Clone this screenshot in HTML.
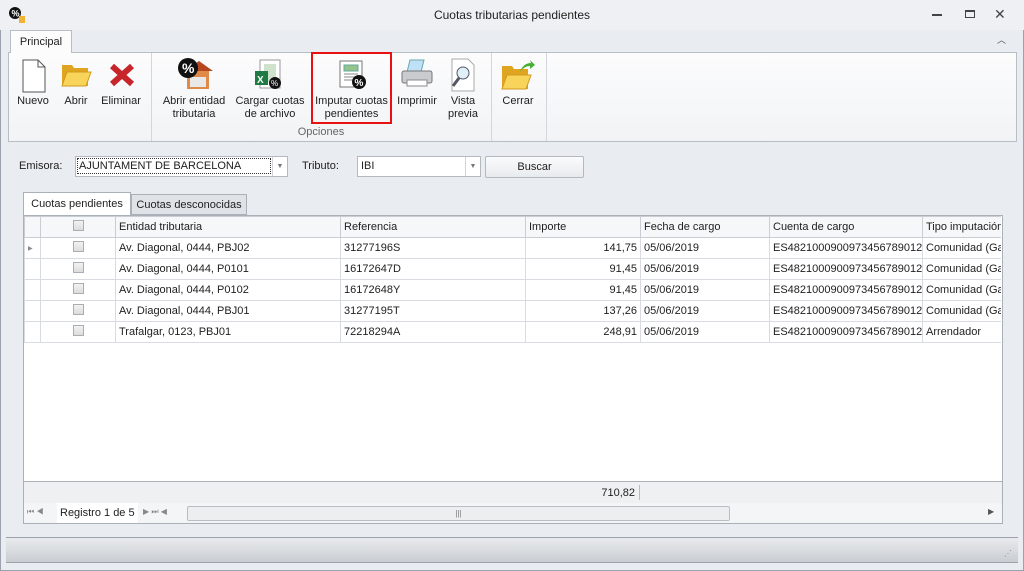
<!DOCTYPE html><html><head><style>
*{box-sizing:border-box;margin:0;padding:0}
body{width:1024px;height:571px;background:#fff;font-family:"Liberation Sans",sans-serif;font-size:11px;color:#1e1e1e;position:relative;overflow:hidden}
.a{position:absolute}
.win{left:0;top:0;width:1024px;height:571px;background:#e9ecf0;border:1px solid #9aa3ad}
.title{left:0;top:0;width:1024px;height:30px;background:#eef0f3}
.ribbon{left:8px;top:52px;width:1009px;height:90px;background:linear-gradient(#fcfcfd,#f1f3f5);border:1px solid #b8bec6}
.lbl{text-align:center;line-height:13px;font-size:11px}
.sep{width:1px;background:#d3d7dc;top:53px;height:88px}
table{border-collapse:collapse;table-layout:fixed}
td{border:1px solid #d8dbdf;height:21px;padding:0 3px;white-space:nowrap;overflow:hidden;font-size:11px}
.hd td{background:#f6f7f8;border-color:#c9ced4}
.cb{display:inline-block;width:11px;height:11px;border:1px solid #a9aeb4;background:linear-gradient(#f2f2f2,#dcdcdc)}
.r{text-align:right}
</style></head><body>
<div class="a win"></div>
<div class="a title"></div>
<svg class="a" style="left:8px;top:6px" width="18" height="18"><circle cx="7" cy="7" r="6" fill="#111"/><text x="3.5" y="10.5" fill="#fff" font-size="9" font-family="Liberation Sans" font-weight="bold">%</text><rect x="11" y="10" width="6" height="7" fill="#f2b233"/></svg>
<div class="a" style="left:0;width:1024px;top:8px;text-align:center;font-size:12px">Cuotas tributarias pendientes</div>
<div class="a" style="left:932px;top:14px;width:10px;height:2px;background:#444"></div>
<div class="a" style="left:965px;top:10px;width:10px;height:8px;border:1px solid #444;border-top-width:2px"></div>
<div class="a" style="left:994px;top:6px;font-size:14px;color:#444">✕</div>
<div class="a" style="left:997px;top:33px;font-size:9px;color:#555">︿</div>
<div class="a ribbon"></div>
<div class="a" style="left:10px;top:30px;width:62px;height:23px;background:#fcfcfd;border:1px solid #b8bec6;border-bottom:none;text-align:center;line-height:23px;font-size:11px">Principal</div>
<svg class="a" style="left:20px;top:59px" width="28" height="34"><path d="M3 1h15l7 7v25H3z" fill="#fff" stroke="#555"/><path d="M18 1v7h7" fill="none" stroke="#555"/></svg>
<svg class="a" style="left:60px;top:62px" width="32" height="26"><path d="M2 3h10l2 3h14v18H2z" fill="#e0a520"/><path d="M2 24l5-14h24l-5 14z" fill="#f8d45a" stroke="#d29a1a"/></svg>
<svg class="a" style="left:108px;top:62px" width="28" height="26"><path d="M4 4l20 18M24 4L4 22" stroke="#c8252b" stroke-width="6"/></svg>
<svg class="a" style="left:177px;top:57px" width="36" height="36"><rect x="10" y="12" width="22" height="20" fill="#e08a4a"/><path d="M8 14l14-10 14 10" fill="#b5461f"/><rect x="13" y="20" width="16" height="10" fill="#e8e8e8"/><circle cx="11" cy="11" r="10" fill="#111"/><text x="5" y="16" fill="#fff" font-size="14" font-weight="bold" font-family="Liberation Sans">%</text></svg>
<svg class="a" style="left:252px;top:58px" width="34" height="34"><rect x="8" y="2" width="20" height="28" fill="#fff" stroke="#999"/><rect x="12" y="6" width="12" height="18" fill="#cfe3cc"/><rect x="3" y="13" width="13" height="14" fill="#1f7a44"/><text x="5" y="25" fill="#fff" font-size="10" font-weight="bold" font-family="Liberation Sans">X</text><circle cx="23" cy="25" r="6" fill="#111"/><text x="19" y="28" fill="#fff" font-size="8" font-family="Liberation Sans">%</text></svg>
<div class="a" style="left:311px;top:52px;width:81px;height:72px;border:2px solid #e81010"></div>
<svg class="a" style="left:335px;top:58px" width="34" height="34"><rect x="5" y="3" width="22" height="26" fill="#fff" stroke="#777"/><rect x="9" y="7" width="14" height="6" fill="#93c48e" stroke="#6a9"/><path d="M9 16h14M9 19h14M9 22h10" stroke="#888"/><circle cx="24" cy="24" r="7" fill="#111"/><text x="19.5" y="28" fill="#fff" font-size="10" font-weight="bold" font-family="Liberation Sans">%</text></svg>
<svg class="a" style="left:400px;top:58px" width="34" height="32"><path d="M10 2h14l-3 12H7z" fill="#bfe0f7" stroke="#6aa"/><rect x="2" y="13" width="30" height="12" rx="2" fill="#c9cbce" stroke="#777"/><rect x="7" y="22" width="20" height="6" fill="#fff" stroke="#888"/></svg>
<svg class="a" style="left:446px;top:58px" width="34" height="34"><path d="M6 1h16l6 6v26H6z" fill="#fff" stroke="#aaa"/><circle cx="17" cy="15" r="6" fill="#dff0fb" stroke="#556"/><path d="M13 20l-6 8" stroke="#556" stroke-width="3"/></svg>
<svg class="a" style="left:500px;top:58px" width="36" height="34"><path d="M2 8h10l2 3h14v20H2z" fill="#e0a520"/><path d="M2 31l5-14h24l-5 14z" fill="#f8d45a" stroke="#d29a1a"/><path d="M20 14c2-6 6-9 11-9l-1-3 5 5-5 4v-3c-4 0-7 2-10 6z" fill="#46b035"/></svg>
<div class="a lbl" style="left:14px;top:95px;width:38px">Nuevo</div>
<div class="a lbl" style="left:58px;top:95px;width:36px">Abrir</div>
<div class="a lbl" style="left:98px;top:95px;width:46px">Eliminar</div>
<div class="a sep" style="left:151px"></div>
<div class="a lbl" style="left:155px;top:95px;width:78px">Abrir entidad<br>tributaria</div>
<div class="a lbl" style="left:232px;top:95px;width:76px">Cargar cuotas<br>de archivo</div>
<div class="a lbl" style="left:311px;top:95px;width:81px">Imputar cuotas<br>pendientes</div>
<div class="a lbl" style="left:395px;top:95px;width:44px">Imprimir</div>
<div class="a lbl" style="left:440px;top:95px;width:46px">Vista<br>previa</div>
<div class="a lbl" style="left:150px;top:126px;width:342px;color:#666">Opciones</div>
<div class="a sep" style="left:491px"></div>
<div class="a lbl" style="left:496px;top:95px;width:44px">Cerrar</div>
<div class="a sep" style="left:546px"></div>
<div class="a" style="left:19px;top:160px">Emisora:</div>
<div class="a" style="left:75px;top:156px;width:213px;height:21px;background:#fff;border:1px solid #b4b9bf"></div>
<div class="a" style="left:77px;top:158px;width:194px;height:16px;border:1px dotted #333;line-height:14px;padding-left:1px">AJUNTAMENT DE BARCELONA</div>
<div class="a" style="left:272px;top:157px;width:15px;height:19px;border-left:1px solid #d0d4d8;color:#777;font-size:7px;text-align:center;line-height:19px">▼</div>
<div class="a" style="left:302px;top:160px">Tributo:</div>
<div class="a" style="left:357px;top:156px;width:124px;height:21px;background:#fff;border:1px solid #b4b9bf;line-height:19px;padding-left:3px">IBI</div>
<div class="a" style="left:465px;top:157px;width:15px;height:19px;border-left:1px solid #d0d4d8;color:#777;font-size:7px;text-align:center;line-height:19px">▼</div>
<div class="a" style="left:485px;top:156px;width:99px;height:22px;border:1px solid #b4b9bf;border-radius:2px;background:linear-gradient(#fafbfc,#e8ebee);text-align:center;line-height:20px">Buscar</div>
<div class="a" style="left:23px;top:192px;width:108px;height:24px;background:#fff;border:1px solid #a9b0b8;border-bottom:none;text-align:center;line-height:22px">Cuotas pendientes</div>
<div class="a" style="left:131px;top:194px;width:116px;height:21px;background:#dfe3e8;border:1px solid #a9b0b8;text-align:center;line-height:20px">Cuotas desconocidas</div>
<div class="a" style="left:23px;top:215px;width:980px;height:309px;background:#fff;border:1px solid #a9b0b8"></div>
<div class="a" style="left:24px;top:216px;width:977px;height:130px;overflow:hidden">
<table style="width:978px">
<colgroup><col style="width:16px"><col style="width:75px"><col style="width:225px"><col style="width:185px"><col style="width:115px"><col style="width:129px"><col style="width:153px"><col style="width:80px"></colgroup>
<tr class="hd"><td></td><td style="text-align:center"><span class="cb"></span></td><td>Entidad tributaria</td><td>Referencia</td><td>Importe</td><td>Fecha de cargo</td><td>Cuenta de cargo</td><td>Tipo imputación</td></tr>
<tr><td style="font-size:6px;color:#888">▶</td><td style="text-align:center"><span class="cb"></span></td><td>Av. Diagonal, 0444, PBJ02</td><td>31277196S</td><td class="r">141,75</td><td>05/06/2019</td><td>ES4821000900973456789012</td><td>Comunidad (Ga</td></tr>
<tr><td></td><td style="text-align:center"><span class="cb"></span></td><td>Av. Diagonal, 0444, P0101</td><td>16172647D</td><td class="r">91,45</td><td>05/06/2019</td><td>ES4821000900973456789012</td><td>Comunidad (Ga</td></tr>
<tr><td></td><td style="text-align:center"><span class="cb"></span></td><td>Av. Diagonal, 0444, P0102</td><td>16172648Y</td><td class="r">91,45</td><td>05/06/2019</td><td>ES4821000900973456789012</td><td>Comunidad (Ga</td></tr>
<tr><td></td><td style="text-align:center"><span class="cb"></span></td><td>Av. Diagonal, 0444, PBJ01</td><td>31277195T</td><td class="r">137,26</td><td>05/06/2019</td><td>ES4821000900973456789012</td><td>Comunidad (Ga</td></tr>
<tr><td></td><td style="text-align:center"><span class="cb"></span></td><td>Trafalgar, 0123, PBJ01</td><td>72218294A</td><td class="r">248,91</td><td>05/06/2019</td><td>ES4821000900973456789012</td><td>Arrendador</td></tr>
</table></div>
<div class="a" style="left:24px;top:481px;width:978px;height:22px;background:#eef0f2;border-top:1px solid #a9b0b8"></div>
<div class="a" style="left:560px;top:487px;width:75px;text-align:right">710,82</div>
<div class="a" style="left:639px;top:485px;width:1px;height:15px;background:#bbb"></div>
<div class="a" style="left:24px;top:503px;width:978px;height:20px;background:#f4f5f6"></div>
<div class="a" style="left:27px;top:507px;font-size:8px;color:#888">⏮ ◀</div>
<div class="a" style="left:57px;top:503px;width:81px;height:20px;background:#fff;line-height:20px;padding-left:3px;font-size:11px;white-space:nowrap">Registro 1 de 5</div>
<div class="a" style="left:143px;top:507px;font-size:8px;color:#888;white-space:nowrap">▶ ⏭ ◀</div>
<div class="a" style="left:187px;top:506px;width:543px;height:15px;border:1px solid #b9bec4;border-radius:2px;background:#eceef0;text-align:center;font-size:8px;line-height:13px;color:#777">|||</div>
<div class="a" style="left:988px;top:507px;font-size:8px;color:#555">▶</div>
<div class="a" style="left:6px;top:537px;width:1012px;height:26px;border-top:1px solid #9aa3ad;border-bottom:1px solid #9aa3ad;background:linear-gradient(#e8eaed,#c9cdd2)"></div>
<div class="a" style="left:1004px;top:549px;font-size:8px;color:#888;letter-spacing:-1px">⋰</div>
</body></html>
